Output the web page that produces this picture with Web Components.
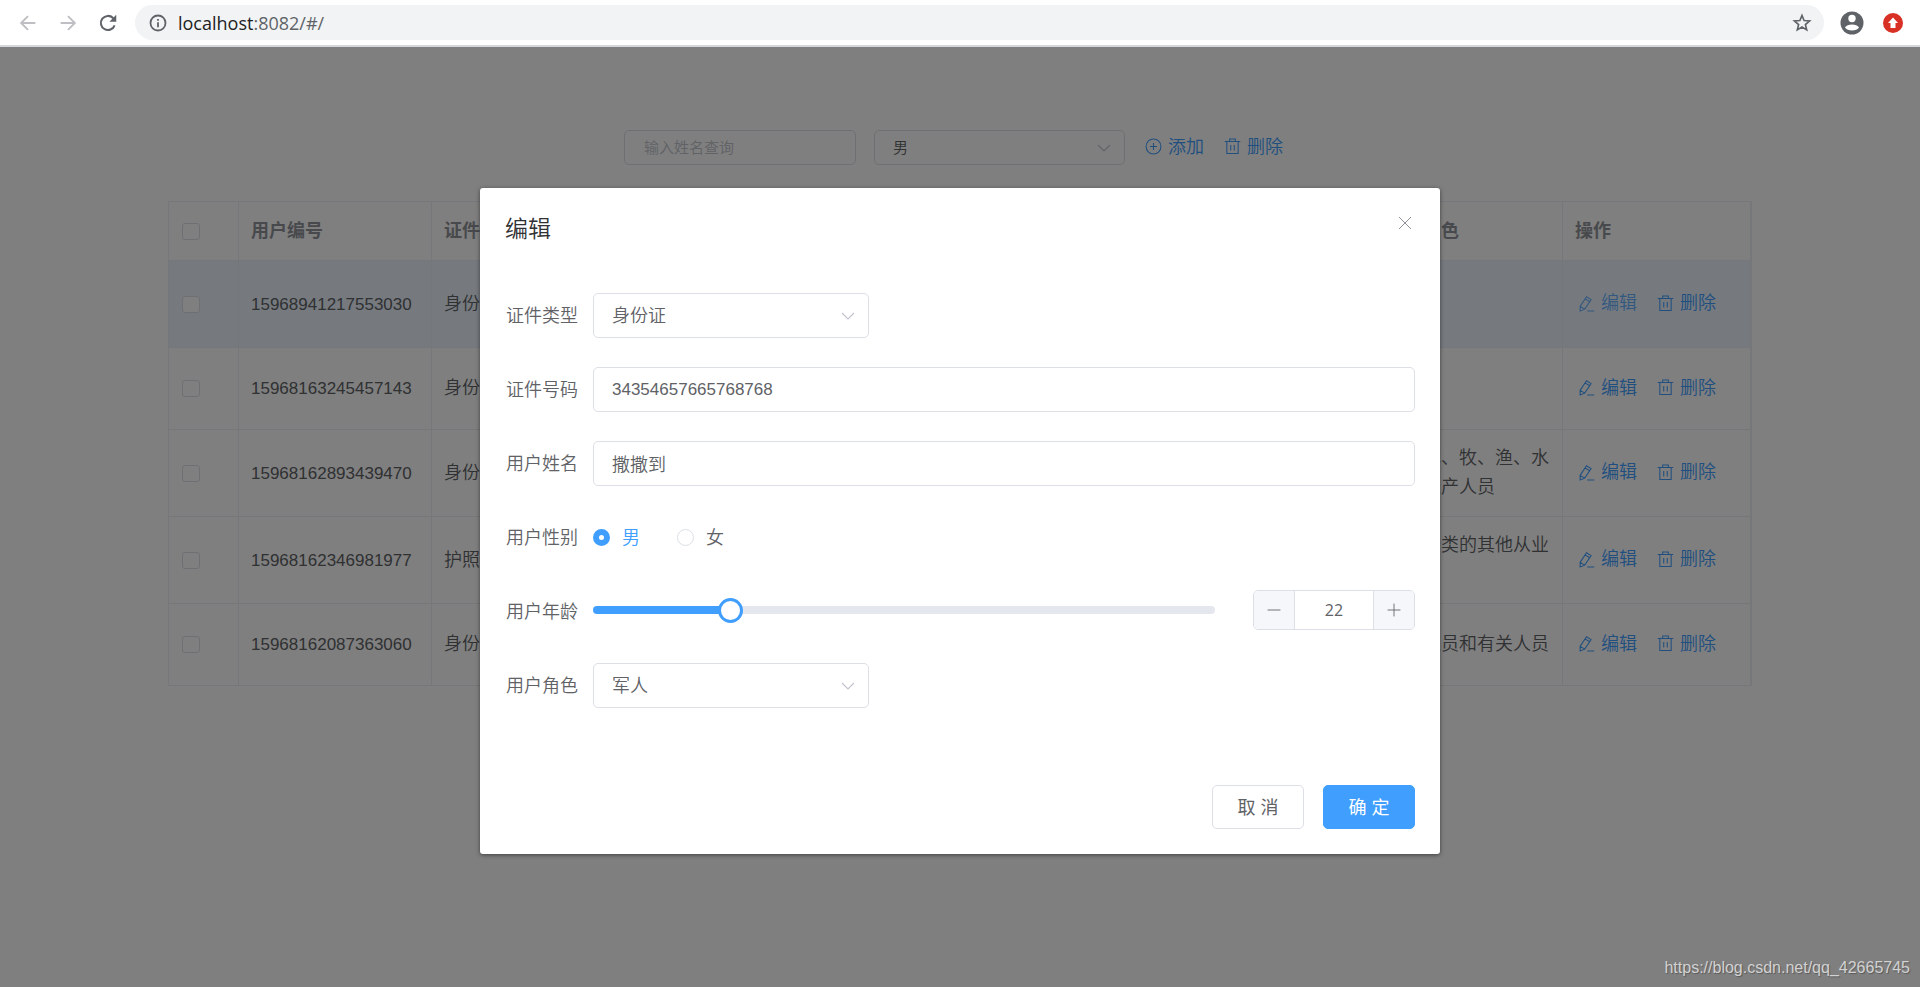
<!DOCTYPE html>
<html lang="zh-CN">
<head>
<meta charset="utf-8">
<title>用户管理</title>
<style>
  html, body { margin: 0; }
  body {
    --primary: #409eff;
    --text: #606266;
    --border: #dcdfe6;
    --line: #ebeef5;
    --base: 18px;
    --num: 17px;
    font-family: "Liberation Sans", "Noto Sans CJK SC", sans-serif;
    font-weight: 350;
    font-size: var(--base);
    color: var(--text);
    background: #fff;
  }
</style>
</head>
<body>
<app-window></app-window>

<script>
const define = (name, html, setup) => {
  const tpl = document.createElement('template');
  tpl.innerHTML = html;
  customElements.define(name, class extends HTMLElement {
    constructor() {
      super();
      this.attachShadow({ mode: 'open' }).append(tpl.content.cloneNode(true));
    }
    connectedCallback() { if (setup) setup(this, this.shadowRoot); }
  });
};

const ICONS = {
  back: '<path d="M20 12H5M12 4.5L4.500 12L12 19.500" stroke-width="2"/>',
  forward: '<path d="M4 12H19M12 4.500L19.500 12L12 19.500" stroke-width="2"/>',
  reload: '<path d="M19.200 14.500A7.700 7.700 0 1 1 17.500 6.600L20 9" stroke-width="2.200"/><path d="M21 3V10.500H13.500Z" fill="currentColor" stroke="none"/>',
  info: '<circle cx="12" cy="12" r="10" stroke-width="2.400"/><path d="M12 11V17.500M12 6.500V9" stroke-width="2.400"/>',
  star: '<path d="M12 3.800L14.300 9.300L20.300 9.800L15.700 13.700L17.100 19.500L12 16.400L6.900 19.500L8.300 13.700L3.700 9.800L9.700 9.300Z" stroke-width="1.800"/>',
  user: '<circle cx="12" cy="12" r="11.500" fill="currentColor" stroke="none"/><circle cx="12" cy="7.500" r="3.700" fill="#fff" stroke="none"/><path d="M5 16.500C7 12.500 17 12.500 19 16.500C17 20.500 7 20.500 5 16.500Z" fill="#fff" stroke="none"/>',
  update: '<circle cx="12" cy="12" r="12" fill="currentColor" stroke="none"/><path d="M12 5.500L18 12H15V18H9V12H6Z" fill="#fff" stroke="none"/>',
  plus: '<circle cx="12" cy="12" r="10.500"/><path d="M12 7V17M7 12H17"/>',
  trash: '<path d="M1 5H23M8 5V1.500H16V5M4 5V22H20V5M9.500 10V17.500M14.500 10V17.500"/>',
  edit: '<path d="M3 16L12 2.500L18.500 6.500L9.500 20L3 22.500ZM10 5.500L16.500 9.500M3 16L9.500 20M13 22.500H23"/>',
  chevron: '<path d="M4 8L12 16L20 8"/>',
  close: '<path d="M3 3L21 21M21 3L3 21"/>',
  minus: '<path d="M1 12H23"/>',
  add: '<path d="M1 12H23M12 1V23"/>'
};

define('ui-icon', `
  <style>
    :host { display: inline-block; width: 18px; height: 18px; flex: none; }
    svg { display: block; width: 100%; height: 100%; fill: none; stroke: currentColor; stroke-width: 1.500; }
  </style>
  <svg viewBox="0 0 24 24" aria-hidden="true"></svg>`,
  (el, root) => { root.querySelector('svg').innerHTML = ICONS[el.getAttribute('name')]; });

define('browser-bar', `
  <style>
    :host { display: flex; align-items: center; box-sizing: border-box; height: 47px; padding: 0 17px 0 17px; border-bottom: 2px solid #d5d7dc; background: #fff; color: #5f6368; }
    button { display: flex; align-items: center; justify-content: center; border: 0; padding: 0; background: none; color: inherit; }
    nav { display: flex; gap: 18px; margin-right: 16px; }
    nav ui-icon { width: 22px; height: 22px; }
    nav button:disabled { color: #bdbfc2; }
    .address { flex: 1; display: flex; align-items: center; height: 35px; padding: 0 11px 0 14px; border-radius: 18px; background: #f1f3f4; }
    .url { flex: 1; margin-left: 11px; font: 400 18px/24px "Open Sans", sans-serif; }
    .url b { font-weight: 400; color: #202124; }
    .star ui-icon { width: 22px; height: 22px; }
    .tools { display: flex; align-items: center; gap: 19px; margin-left: 16px; }
    .user ui-icon { width: 24px; height: 24px; }
    .update ui-icon { width: 20px; height: 20px; color: #d93025; }
  </style>
  <nav>
    <button disabled aria-label="后退"><ui-icon name="back"></ui-icon></button>
    <button disabled aria-label="前进"><ui-icon name="forward"></ui-icon></button>
    <button aria-label="刷新"><ui-icon name="reload"></ui-icon></button>
  </nav>
  <div class="address">
    <ui-icon name="info"></ui-icon>
    <span class="url"><b>localhost</b>:8082/#/</span>
    <button class="star" aria-label="收藏"><ui-icon name="star"></ui-icon></button>
  </div>
  <div class="tools">
    <button class="user" aria-label="用户"><ui-icon name="user"></ui-icon></button>
    <button class="update" aria-label="更新"><ui-icon name="update"></ui-icon></button>
  </div>`);

define('select-box', `
  <style>
    :host { display: grid; align-items: center; }
    ::slotted(select) {
      grid-area: 1 / 1; box-sizing: border-box; width: 100%; height: 100%; margin: 0; padding: 0 40px 0 18px;
      appearance: none; border: 1px solid var(--border); border-radius: 5px; background: transparent;
      color: inherit; font: inherit;
    }
    ui-icon { grid-area: 1 / 1; justify-self: end; margin-right: 12px; color: #c0c4cc; pointer-events: none; }
  </style>
  <slot></slot><ui-icon name="chevron"></ui-icon>`);

define('text-button', `
  <style>
    :host { display: inline-block; }
    button { display: flex; align-items: center; gap: 6px; padding: 0 0 2px; border: 0; background: none; color: var(--primary); font: inherit; line-height: 24px; white-space: nowrap; }
    ui-icon { width: 17px; height: 17px; }
    :host([hovered]) button { color: #66b1ff; }
  </style>
  <button type="button"><ui-icon></ui-icon><slot></slot></button>`,
  (el, root) => {
    const old = root.querySelector('ui-icon');
    const icon = document.createElement('ui-icon');
    icon.setAttribute('name', el.getAttribute('icon'));
    old.replaceWith(icon);
  });

define('filter-bar', `
  <style>
    :host { display: flex; justify-content: center; align-items: center; height: 35px; padding-right: 13px; }
    input { box-sizing: border-box; width: 232px; height: 35px; padding: 0 19px; border: 1px solid var(--border); border-radius: 5px; background: #fff; font: inherit; font-size: 15px; }
    input::placeholder { color: #c0c4cc; opacity: 1; }
    select-box { width: 251px; height: 35px; margin: 0 20px 0 18px; font-size: 15px; }
    text-button + text-button { margin-left: 20px; }
  </style>
  <input type="text" placeholder="输入姓名查询" aria-label="姓名">
  <select-box><select aria-label="性别"><option>男</option><option>女</option></select></select-box>
  <text-button icon="plus">添加</text-button>
  <text-button icon="trash">删除</text-button>`);

define('user-table', `
  <style>
    :host { display: block; }
    table { width: 100%; border-collapse: separate; border-spacing: 0; table-layout: fixed; border: 1px solid var(--line); border-right-width: 2px; border-bottom: 0; }
    th, td { box-sizing: border-box; padding: 14px 12px; border-right: 1px solid var(--line); border-bottom: 1px solid var(--line); text-align: left; line-height: 29px; height: 82px; font-weight: inherit; }
    th { height: 59px; color: #909399; font-weight: 700; }
    th:last-child, td:last-child { border-right: 0; }
    th:first-child, td:first-child { padding-left: 13px; }
    tr.tall td { height: 87px; }
    tr.active td { background: #ecf5ff; }
    .num { font-size: var(--num); }
    input { display: block; appearance: none; box-sizing: border-box; width: 18px; height: 17px; margin: 0; border: 1px solid var(--border); border-radius: 3px; background: #fff; }
    text-button + text-button { margin-left: 20px; }
    td:last-child { padding-left: 15px; }
    .ops { display: flex; }
  </style>
  <table>
    <colgroup><col style="width:70px"><col style="width:193px"><col style="width:188px"><col><col style="width:188px"><col style="width:187px"></colgroup>
    <thead><tr><th><input type="checkbox" aria-label="全选"></th><th>用户编号</th><th>证件</th><th></th><th>用户角色</th><th>操作</th></tr></thead>
    <tbody></tbody>
  </table>`,
  (el, root) => {
    const rows = [
      ['15968941217553030', '身份证', '军人', 'tall active'],
      ['15968163245457143', '身份证', '军人', ''],
      ['15968162893439470', '身份证', '农、林、牧、渔、水利业生产人员', 'tall'],
      ['15968162346981977', '护照', '不便分类的其他从业人员', 'tall'],
      ['15968162087363060', '身份证', '办事人员和有关人员', '']
    ];
    root.querySelector('tbody').innerHTML = rows.map(([id, type, role, cls], i) => `
      <tr class="${cls}"><td><input type="checkbox" aria-label="选择 ${id}"></td><td class="num">${id}</td><td>${type}</td><td></td><td>${role}</td>
      <td><div class="ops"><text-button icon="edit"${i ? '' : ' hovered'}>编辑</text-button><text-button icon="trash">删除</text-button></div></td></tr>`).join('');
  });

define('edit-dialog', `
  <style>
    :host { display: block; box-sizing: border-box; background: #fff; border-radius: 3px; box-shadow: 0 1px 4px rgba(0, 0, 0, .5); padding: 25px; }
    header { display: flex; justify-content: space-between; align-items: flex-start; }
    h2 { margin: 0; font-size: 23px; line-height: 32px; font-weight: inherit; color: #303133; }
    .close { border: 0; padding: 2px; background: none; color: #909399; }
    .close ui-icon { display: block; width: 16px; height: 16px; }
    form { display: grid; grid-template-columns: 73px 1fr; column-gap: 15px; row-gap: 29px; grid-auto-rows: 45px; align-items: center; margin-top: 48px; }
    form > label, form > .label { padding-bottom: 3px; text-align: right; white-space: nowrap; }
    .text { box-sizing: border-box; width: 100%; height: 45px; padding: 0 18px 2px; border: 1px solid var(--border); border-radius: 5px; color: inherit; font: inherit; }
    .num { padding-bottom: 0; font-size: var(--num); }
    select-box { width: 276px; height: 45px; }
    .radios { display: flex; gap: 37px; }
    .radios label { display: flex; align-items: center; gap: 12px; }
    .radios span { padding-bottom: 3px; }
    .radios label:has(:checked) { color: var(--primary); }
    .radios input { appearance: none; box-sizing: border-box; width: 17px; height: 17px; margin: 0; border: 1px solid var(--border); border-radius: 50%; background: #fff; }
    .radios input:checked { border: 6px solid var(--primary); }
    .age { display: flex; align-items: center; gap: 38px; padding-bottom: 3px; }
    .track { flex: 1; display: grid; grid-template-rows: 100%; align-items: center; height: 8px; border-radius: 4px; background: linear-gradient(to right, var(--primary) 22%, #e4e7ed 22%); }
    .track input { appearance: none; height: 25px; margin: 0 -12px; background: transparent; }
    .track input::-webkit-slider-thumb { appearance: none; box-sizing: border-box; width: 25px; height: 25px; border: 3px solid var(--primary); border-radius: 50%; background: #fff; }
    .stepper { display: grid; grid-template-columns: 40px 1fr 40px; box-sizing: border-box; width: 162px; height: 40px; border: 1px solid var(--border); border-radius: 5px; overflow: hidden; }
    .stepper button { display: flex; align-items: center; justify-content: center; padding: 0; border: 0; background: #f5f7fa; color: var(--text); }
    .stepper button ui-icon { width: 14px; height: 14px; }
    .stepper input { min-width: 0; padding: 0; border: 0; border-left: 1px solid var(--border); border-right: 1px solid var(--border); text-align: center; color: inherit; font: 400 16px "Open Sans", sans-serif; }
    footer { display: flex; justify-content: flex-end; gap: 19px; margin-top: 77px; }
    footer button { width: 92px; height: 44px; padding: 0 0 2px; border: 1px solid var(--border); border-radius: 5px; background: #fff; color: var(--text); font: inherit; font-weight: 400; }
    footer .primary { border-color: var(--primary); background: var(--primary); color: #fff; }
  </style>
  <header>
    <h2>编辑</h2>
    <button class="close" type="button" aria-label="关闭"><ui-icon name="close"></ui-icon></button>
  </header>
  <form>
    <label for="type">证件类型</label>
    <select-box><select id="type"><option>身份证</option><option>护照</option></select></select-box>
    <label for="number">证件号码</label>
    <input class="text num" id="number" type="text" value="34354657665768768">
    <label for="name">用户姓名</label>
    <input class="text" id="name" type="text" value="撒撒到">
    <span class="label" id="sex">用户性别</span>
    <div class="radios" role="radiogroup" aria-labelledby="sex">
      <label><input type="radio" name="sex" checked><span>男</span></label>
      <label><input type="radio" name="sex"><span>女</span></label>
    </div>
    <label for="age">用户年龄</label>
    <div class="age">
      <div class="track"><input id="age" type="range" min="0" max="100" value="22"></div>
      <div class="stepper">
        <button type="button" aria-label="减少"><ui-icon name="minus"></ui-icon></button>
        <input type="text" value="22" aria-label="年龄">
        <button type="button" aria-label="增加"><ui-icon name="add"></ui-icon></button>
      </div>
    </div>
    <label for="role">用户角色</label>
    <select-box><select id="role"><option>军人</option></select></select-box>
  </form>
  <footer>
    <button type="button">取 消</button>
    <button type="button" class="primary">确 定</button>
  </footer>`,
  (el, root) => {
    const range = root.querySelector('#age');
    const field = root.querySelector('.stepper input');
    const [less, more] = root.querySelectorAll('.stepper button');
    const set = v => {
      range.value = v;
      field.value = range.value;
      root.querySelector('.track').style.background =
        `linear-gradient(to right, var(--primary) ${range.value}%, #e4e7ed ${range.value}%)`;
    };
    range.oninput = () => set(range.value);
    field.onchange = () => set(field.value);
    less.onclick = () => set(+range.value - 1);
    more.onclick = () => set(+range.value + 1);
  });

define('app-window', `
  <style>
    :host { display: flex; flex-direction: column; min-height: 100vh; }
    main { flex: 1; position: relative; }
    filter-bar { margin-top: 83px; }
    user-table { width: 82.500%; margin: 36px auto 0; }
    .mask { position: absolute; inset: 0; display: flex; justify-content: center; align-items: flex-start; background: rgba(0, 0, 0, .5); }
    edit-dialog { width: 50%; margin-top: 141px; }
    .mark { position: absolute; right: 10px; bottom: 9px; font-size: 16px; line-height: 20px; font-weight: 400; color: #d2d2d2; text-shadow: 1px 1px 1px rgba(0, 0, 0, .3); text-decoration: none; }
  </style>
  <browser-bar></browser-bar>
  <main>
    <filter-bar></filter-bar>
    <user-table></user-table>
    <div class="mask"><edit-dialog role="dialog" aria-label="编辑"></edit-dialog></div>
    <a class="mark" href="https://blog.csdn.net/qq_42665745">https://blog.csdn.net/qq_42665745</a>
  </main>`);
</script>
</body>
</html>
